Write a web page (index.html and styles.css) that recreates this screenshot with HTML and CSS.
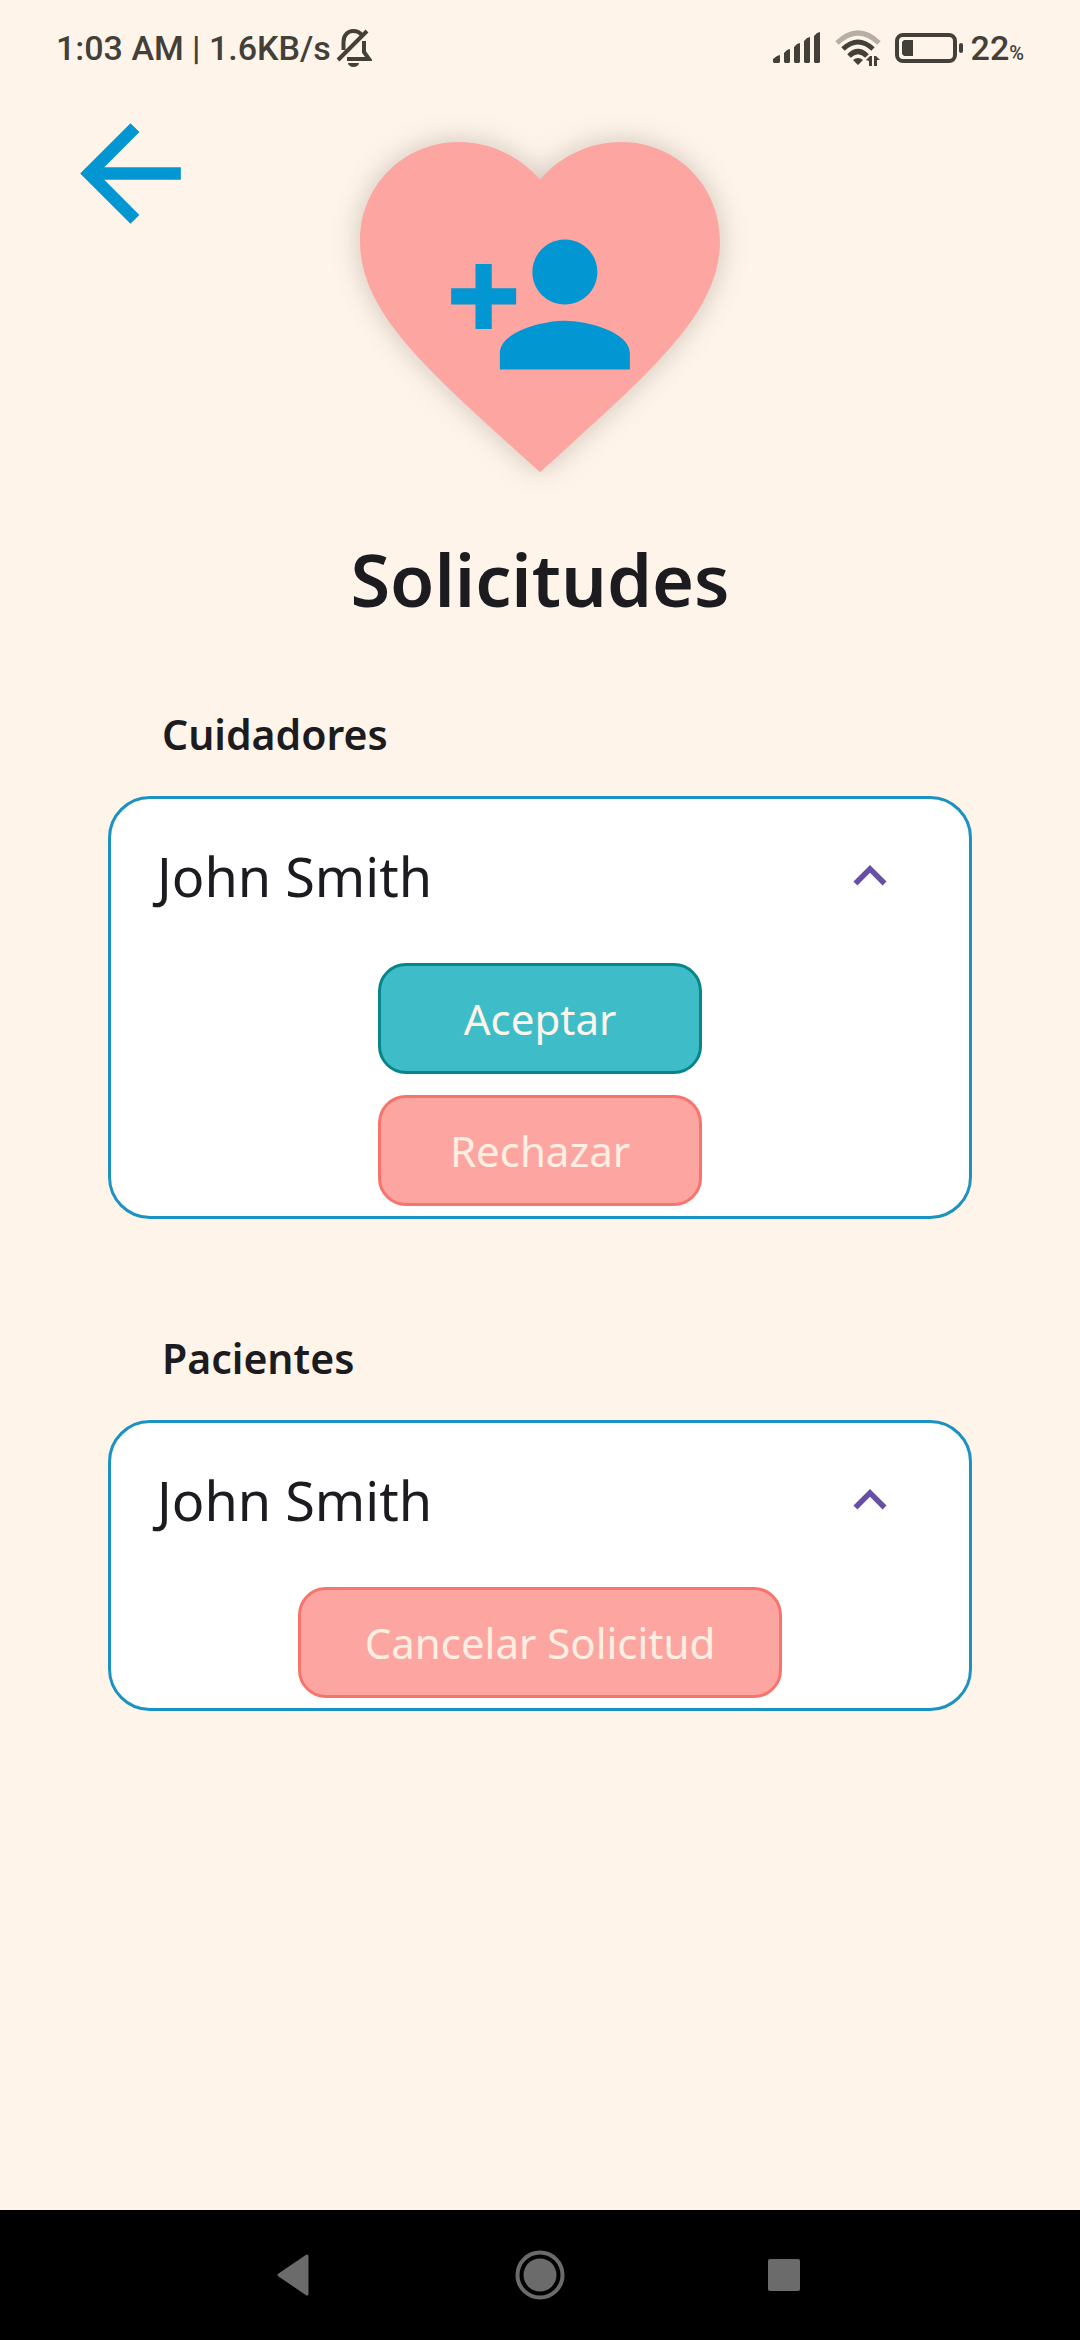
FILE: index.html
```html
<!DOCTYPE html>
<html lang="es">
<head>
<meta charset="utf-8">
<meta name="viewport" content="width=device-width, initial-scale=1">
<title>Solicitudes</title>
<link rel="stylesheet" href="styles.css">
</head>
<body>
<div class="screen">
  <header class="status-bar">
    <div class="status-group status-left">
      <span>1:03 AM | 1.6KB/s</span>
      <svg class="icon-bell" viewBox="0 0 36 40" aria-hidden="true">
        <path d="M2 32 31 3M7.500 22V14C7.500 7 12 3 17 3c4 0 7 1.500 8.500 4M28 13v11l5 7H11" fill="none" stroke="currentColor" stroke-width="4"/>
        <path d="M12 35h11a5.500 4 0 0 1-11 0z" fill="currentColor"/>
      </svg>
    </div>
    <div class="status-group status-right">
      <div class="status-group signals">
        <svg class="icon-signal" viewBox="0 0 48 32" fill="currentColor" aria-hidden="true">
          <path d="M0 27l4-3 3-1v7l-1 1H1l-1-1zM11 21l3-3 3-1v13l-1 1h-4l-1-1zM21 15l3-3 3-1v19l-1 1h-4l-1-1zM31 9l3-3 3-1v25l-1 1h-4l-1-1zM41 4l3-3 3-1v30l-1 1h-4l-1-1z"/>
        </svg>
        <svg class="icon-wifi" viewBox="0 0 46 36" aria-hidden="true">
          <g fill="none" stroke="currentColor" stroke-width="5">
            <path d="M2 13Q23-7 44 13" opacity=".38"/>
            <path d="M8 19Q23 5 38 19M14 26Q23 17 32 26"/>
          </g>
          <path d="M18 30q5-4 10 0l-5 5zM31 30l4-4h2v10h-3v-5zM39 26h2l4 4h-3v6h-3z" fill="currentColor"/>
        </svg>
        <svg class="icon-battery" viewBox="0 0 68 30" aria-hidden="true">
          <rect x="2" y="2" width="58" height="26" rx="6" fill="none" stroke="currentColor" stroke-width="4"/>
          <path d="M9 7h9v16H9l-2-2V9z" fill="currentColor"/>
          <rect x="64" y="10" width="4" height="10" rx="2" fill="currentColor"/>
        </svg>
      </div>
      <span>22<small class="percent">%</small></span>
    </div>
  </header>

  <main class="content">
    <div class="hero">
      <button class="back" type="button" aria-label="Volver">
        <svg viewBox="0 0 24 24" fill="currentColor"><path d="M20 11H7.830l5.590-5.590L12 4l-8 8 8 8 1.410-1.410L7.830 13H20z"/></svg>
      </button>
      <div class="badge">
        <svg class="heart" viewBox="0 0 24 24" fill="currentColor" aria-hidden="true"><path d="M12 21.350l-1.450-1.320C5.400 15.360 2 12.280 2 8.500 2 5.420 4.420 3 7.500 3c1.740 0 3.410.810 4.500 2.090C13.090 3.810 14.760 3 16.500 3 19.580 3 22 5.420 22 8.500c0 3.780-3.400 6.860-8.550 11.540z"/></svg>
        <svg class="person" viewBox="0 0 24 24" fill="currentColor" aria-hidden="true"><path d="M15 12c2.210 0 4-1.790 4-4s-1.790-4-4-4-4 1.790-4 4 1.790 4 4 4zm-9-2V7H4v3H1v2h3v3h2v-3h3v-2zm9 4c-2.670 0-8 1.340-8 4v2h16v-2c0-2.660-5.330-4-8-4z"/></svg>
      </div>
    </div>

    <h1 class="title">Solicitudes</h1>

    <section class="section">
      <h2 class="section-title">Cuidadores</h2>
      <div class="card">
        <div class="card-head">
          <span>John Smith</span>
          <button class="toggle" type="button" aria-label="Contraer" aria-expanded="true">
            <svg viewBox="0 0 24 24" fill="currentColor"><path d="M12 8l-6 6 1.410 1.410L12 10.830l4.590 4.580L18 14z"/></svg>
          </button>
        </div>
        <button class="btn btn-accept" type="button">Aceptar</button>
        <button class="btn btn-reject" type="button">Rechazar</button>
      </div>
    </section>

    <section class="section">
      <h2 class="section-title">Pacientes</h2>
      <div class="card">
        <div class="card-head">
          <span>John Smith</span>
          <button class="toggle" type="button" aria-label="Contraer" aria-expanded="true">
            <svg viewBox="0 0 24 24" fill="currentColor"><path d="M12 8l-6 6 1.410 1.410L12 10.830l4.590 4.580L18 14z"/></svg>
          </button>
        </div>
        <button class="btn btn-reject" type="button">Cancelar Solicitud</button>
      </div>
    </section>
  </main>

  <nav class="nav-bar" aria-label="Sistema">
    <button type="button" aria-label="Atrás"><svg viewBox="0 0 50 50"><path d="M8 25 36 6v38z" fill="currentColor" stroke="currentColor" stroke-width="3" stroke-linejoin="round"/></svg></button>
    <button type="button" aria-label="Inicio"><svg viewBox="0 0 50 50"><circle cx="25" cy="25" r="22.500" fill="none" stroke="currentColor" stroke-width="4"/><circle cx="25" cy="25" r="16.500" fill="currentColor"/></svg></button>
    <button type="button" aria-label="Recientes"><svg viewBox="0 0 50 50"><rect x="9" y="9" width="32" height="32" rx="2" fill="currentColor"/></svg></button>
  </nav>
</div>
</body>
</html>
```
FILE: styles.css
```css
:root {
  --cream: #fff4e9;
  --pink: #fda6a1;
  --blue: #0296d3;
  --ink: #1c1b1f;
}

* {
  box-sizing: border-box;
}

body {
  margin: 0;
  background: var(--cream);
  color: var(--ink);
  font-family: "Noto Sans", "Open Sans", sans-serif;
}

button {
  padding: 0;
  border: 0;
  background: none;
  color: inherit;
  font: inherit;
}

svg {
  display: block;
}

.screen {
  display: flex;
  flex-direction: column;
  min-height: 100vh;
}

.status-bar {
  display: flex;
  justify-content: space-between;
  height: 88px;
  padding: 8px 56px 0;
  color: #433f39;
  font: 500 34px/80px Roboto, sans-serif;
}

.status-group {
  display: flex;
  align-items: center;
}

.status-left { gap: 5px; }
.status-right { gap: 8px; }
.signals { gap: 14px; }

.icon-bell { width: 36px; height: 40px; }
.icon-signal { width: 48px; height: 32px; }
.icon-wifi { width: 46px; height: 36px; }
.icon-battery { width: 68px; height: 30px; }

.percent {
  font-size: 20px;
  line-height: 1;
}

.content {
  flex: 1;
}

.hero {
  display: grid;
  grid-template-columns: 1fr auto 1fr;
}

.back {
  justify-self: start;
  align-self: start;
  width: 151px;
  height: 151px;
  margin: 10px 0 0 55px;
  color: var(--blue);
}

.badge {
  display: grid;
  place-items: center;
}

.badge > svg {
  grid-area: 1 / 1;
}

.heart {
  width: 432px;
  height: 432px;
  color: var(--pink);
  filter: drop-shadow(0 0 14px rgba(0, 0, 0, .2));
}

.person {
  z-index: 1;
  width: 195px;
  height: 195px;
  color: var(--blue);
}

.title {
  margin: 0;
  font-size: 72px;
  font-weight: 600;
  line-height: 118px;
  text-align: center;
}

.section {
  width: 80%;
  margin: 60px auto 0;
}

.section + .section {
  margin-top: 103px;
}

.section-title {
  margin: 0;
  padding: 0 54px;
  font-size: 41px;
  font-weight: 600;
  line-height: 72px;
}

.card {
  display: flex;
  flex-direction: column;
  align-items: center;
  gap: 21px;
  margin-top: 26px;
  padding: 0 46px 10px;
  border: 3px solid #1a92c2;
  border-radius: 42px;
  background: #fff;
}

.card-head {
  display: flex;
  justify-content: space-between;
  align-items: center;
  width: 100%;
  height: 143px;
  padding-top: 10px;
  font-size: 54px;
}

.toggle {
  width: 66px;
  height: 66px;
  margin-right: 20px;
  color: #6750a4;
}

.btn {
  min-width: 324px;
  height: 111px;
  padding: 0 64px;
  border: 3px solid;
  border-radius: 28px;
  font-size: 42px;
}

.btn-accept {
  border-color: #07858b;
  background: #3ebdc8;
  color: #fff4e9;
}

.btn-reject {
  border-color: #f9736d;
  background: var(--pink);
  color: #ffefe3;
}

.nav-bar {
  display: flex;
  justify-content: center;
  align-items: center;
  gap: 194px;
  height: 130px;
  background: #000;
  color: #6b6b6b;
}

.nav-bar button {
  width: 50px;
  height: 50px;
}
```
